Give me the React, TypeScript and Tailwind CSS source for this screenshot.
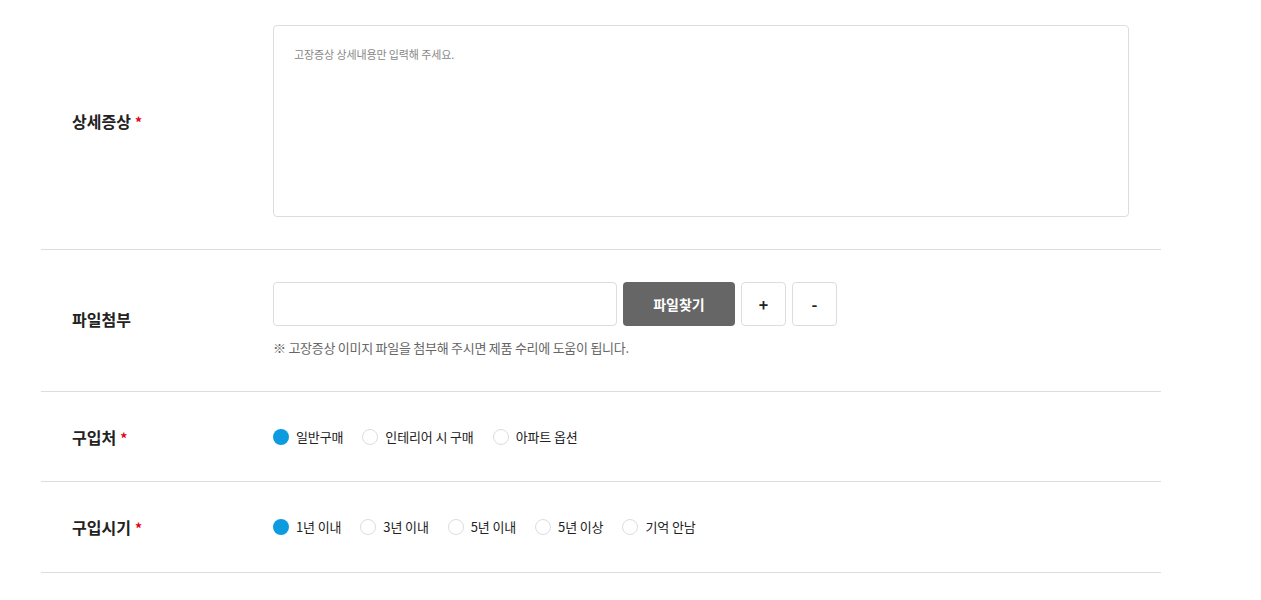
import React, { useState } from 'react';

const font = { fontFamily: '"Noto Sans CJK KR", "Noto Sans", sans-serif' };

function Label({ text, required }: { text: string; required?: boolean }) {
  return (
    <div className="w-[232px] shrink-0 pl-[31px] text-[16px] font-bold text-[#222]">
      {text}
      {required && <span className="ml-1 text-[14px] text-[#e60012]">*</span>}
    </div>
  );
}

function RadioGroup({ options, name }: { options: string[]; name: string }) {
  const [value, setValue] = useState(options[0]);
  return (
    <div className="flex items-center gap-[19px]">
      {options.map((opt) => (
        <label
          key={opt}
          className="flex cursor-pointer items-center gap-[7px] text-[13px] leading-4 tracking-[-0.01em] text-[#222]"
        >
          <input
            type="radio"
            name={name}
            className="hidden"
            checked={value === opt}
            onChange={() => setValue(opt)}
          />
          <span
            className={
              value === opt
                ? 'h-4 w-4 rounded-full bg-[#0d9be0]'
                : 'h-4 w-4 rounded-full border border-[#ddd] bg-white'
            }
          />
          {opt}
        </label>
      ))}
    </div>
  );
}

export default function App() {
  return (
    <div className="min-h-[600px] bg-white" style={font}>
      <div className="ml-[41px] w-[1120px]">
        {/* 상세증상 */}
        <div className="flex items-center border-b border-[#ddd] pb-8 pt-[25px]">
          <Label text="상세증상" required />
          <textarea
            className="h-[192px] w-[856px] resize-none rounded border border-[#ddd] px-5 py-[20px] text-[11px] tracking-[-0.01em] text-[#333] outline-none placeholder:text-[#888]"
            placeholder="고장증상 상세내용만 입력해 주세요."
          />
        </div>

        {/* 파일첨부 */}
        <div className="flex items-center border-b border-[#ddd] pb-[35px] pt-8">
          <Label text="파일첨부" />
          <div>
            <div className="flex gap-[6px]">
              <input type="text" className="h-[44px] w-[344px] rounded border border-[#ddd] outline-none" />
              <button className="h-[44px] w-[112px] rounded bg-[#666] text-[14px] font-bold text-white">파일찾기</button>
              <button className="h-[44px] w-[45px] rounded border border-[#ddd] bg-white text-[16px] font-bold text-[#222]">+</button>
              <button className="h-[44px] w-[45px] rounded border border-[#ddd] bg-white text-[16px] font-bold text-[#222]">-</button>
            </div>
            <p className="mt-[14px] text-[13px] leading-[16px] tracking-[-0.02em] text-[#666]">
              ※ 고장증상 이미지 파일을 첨부해 주시면 제품 수리에 도움이 됩니다.
            </p>
          </div>
        </div>

        {/* 구입처 */}
        <div className="flex h-[90px] items-center border-b border-[#ddd]">
          <Label text="구입처" required />
          <RadioGroup name="place" options={['일반구매', '인테리어 시 구매', '아파트 옵션']} />
        </div>

        {/* 구입시기 */}
        <div className="flex h-[91px] items-center border-b border-[#ddd]">
          <Label text="구입시기" required />
          <RadioGroup name="period" options={['1년 이내', '3년 이내', '5년 이내', '5년 이상', '기억 안남']} />
        </div>
      </div>
    </div>
  );
}
